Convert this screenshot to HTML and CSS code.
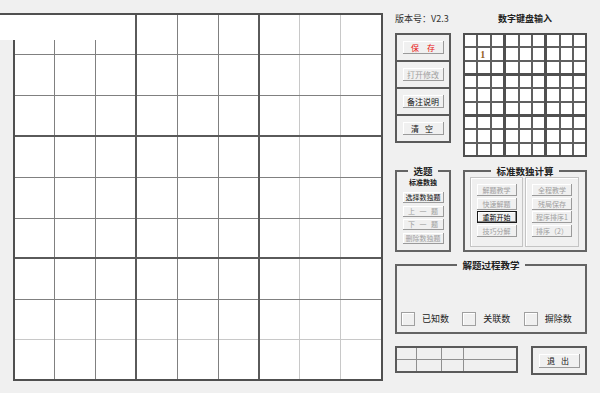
FILE: index.html
```html
<!DOCTYPE html>
<html lang="zh-CN">
  <head>
    <meta charset="UTF-8" />
    <title>数独</title>
    <link rel="stylesheet" href="styles.css">
  </head>
  <body>
    <div class="window">
      <svg class="board" width="370" height="368" viewBox="0 0 370 368">
        <rect width="370" height="368" fill="#fff"/>
        <path stroke="#c8c8c8" stroke-width="1" d="M286.5 0V368M327.5 0V368M0 326.5H370"/>
        <path stroke="#808080" stroke-width="1" d="M41.5 0V368M82.5 0V368M164.5 0V368M205.5 0V368M0 41.5H370M0 82.5H370M0 164.5H370M0 205.5H370M0 286.5H370"/>
        <path stroke="#5a5a5a" stroke-width="2" d="M123 0V368M246 0V368M0 123H370M0 245H370"/>
        <rect x="1" y="1" width="368" height="366" fill="none" stroke="#505050" stroke-width="2"/>
      </svg>
      <div class="board-tag"></div>

      <div class="panel">
        <div class="head">
          <span class="version">版本号：V2.3</span>
          <span class="pad-title">数字键盘输入</span>
        </div>

        <div class="row">
          <div class="tools">
            <div class="slot"><button class="btn save">保　存</button></div>
            <div class="slot"><button class="btn off">打开修改</button></div>
            <div class="slot"><button class="btn">备注说明</button></div>
            <div class="slot"><button class="btn wide">清 空</button></div>
          </div>
          <svg class="pad" width="124" height="124" viewBox="0 0 124 124">
            <rect width="124" height="124" fill="#fff"/>
            <path stroke="#606060" stroke-width="2" fill="none" d="M14 0V124M28 0V124M56 0V124M69 0V124M97 0V124M110 0V124M0 14H124M0 28H124M0 55H124M0 69H124M0 96H124M0 110H124"/>
            <path stroke="#505050" stroke-width="3" d="M41.5 0V124M82.5 0V124M0 41.5H124M0 82.5H124"/>
            <rect x="1" y="1" width="122" height="122" fill="none" stroke="#505050" stroke-width="2"/>
            <text x="19.8" y="25" class="pad-num">1</text>
          </svg>
        </div>

        <div class="row groups">
          <fieldset class="group pick">
            <legend>选题</legend>
            <div class="pick-label">标准数独</div>
            <div class="stack">
              <button class="btn small">选择数独题</button>
              <button class="btn small off spread">上 一 题</button>
              <button class="btn small off spread">下 一 题</button>
              <button class="btn small off">删除数独题</button>
            </div>
          </fieldset>

          <fieldset class="group calc">
            <legend>标准数独计算</legend>
            <div class="calc-cols">
              <div class="col">
                <button class="btn mid off">解题教学</button>
                <button class="btn mid off">快速解题</button>
                <button class="btn mid default">重新开始</button>
                <button class="btn mid off">技巧分解</button>
              </div>
              <div class="col">
                <button class="btn mid off">全程教学</button>
                <button class="btn mid off">残局保存</button>
                <button class="btn mid off">程序排序1</button>
                <button class="btn mid off">排序（2）</button>
              </div>
            </div>
          </fieldset>
        </div>

        <fieldset class="group steps">
          <legend>解题过程教学</legend>
          <div class="checks">
            <label class="check"><span class="box"></span>已知数</label>
            <label class="check"><span class="box"></span>关联数</label>
            <label class="check"><span class="box"></span>摒除数</label>
          </div>
        </fieldset>

        <div class="row bottom">
          <div class="status">
            <span></span><span></span><span></span><span></span>
            <span></span><span></span><span></span><span></span>
          </div>
          <div class="exit-box"><button class="btn exit">退 出</button></div>
        </div>
      </div>
    </div>
  </body>
</html>
```

FILE: styles.css
```css
* {
  box-sizing: border-box;
}

body {
  margin: 0;
  background: #f0f0f0;
  font-family: "Noto Sans CJK SC", "Noto Sans", sans-serif;
  color: #1a1a1a;
}

.window {
  position: relative;
  display: flex;
  align-items: flex-start;
  height: 393px;
  padding: 13px 0 0 13px;
}

.board {
  display: block;
  flex: none;
}

/* white strip that sits over the first row of the board */
.board-tag {
  position: absolute;
  left: 0;
  top: 13px;
  width: 135px;
  height: 27px;
  background: #fff;
  border-top: 2px solid #505050;
}

.panel {
  margin-left: 12px;
  width: 193px;
  display: flex;
  flex-direction: column;
}

.head {
  display: flex;
  height: 20px;
  font-size: 9px;
  line-height: 12px;
  color: #333;
}

.version {
  width: 68px;
}

.pad-title {
  width: 124px;
  text-align: center;
  font-weight: bold;
  color: #222;
}

.row {
  display: flex;
  gap: 12px;
}

/* buttons */
.btn {
  display: block;
  margin: 0;
  padding: 0;
  border: none;
  width: 41px;
  height: 13px;
  background: #f0f0f0;
  font-family: inherit;
  font-size: 8px;
  line-height: 13px;
  color: #111;
  text-align: center;
  white-space: nowrap;
  overflow: hidden;
  box-shadow: inset -1px -1px #9a9a9a, inset 1px 1px #fff;
}

.btn.save {
  color: #e81010;
}

.btn.wide {
  letter-spacing: 2px;
}

.btn.off {
  color: #a0a0a0;
}

.btn.small {
  height: 11px;
  line-height: 11px;
  font-size: 7px;
}

.btn.spread {
  word-spacing: 3px;
}

.btn.mid {
  width: 40px;
  height: 12px;
  line-height: 12px;
  font-size: 7px;
}

.btn.default {
  border: 1px solid #1a1a1a;
  line-height: 10px;
  color: #000;
  box-shadow: inset -1px -1px #8a8a8a, inset 1px 1px #fff;
}

.btn.exit {
  height: 14px;
  line-height: 14px;
  letter-spacing: 2px;
}

/* top-left tool box */
.tools {
  width: 56px;
  height: 110px;
  border: 2px solid #5a5a5a;
  display: flex;
  flex-direction: column;
}

.slot {
  flex: 1;
  display: flex;
  align-items: center;
  justify-content: center;
  border-top: 2px solid #5a5a5a;
}

.slot:first-child {
  border-top: none;
}

.pad {
  display: block;
}

.pad-num {
  font-family: "Liberation Serif", serif;
  font-size: 10px;
  font-weight: bold;
  fill: #94621f;
  text-anchor: middle;
}

/* group boxes */
.group {
  margin: 0;
  padding: 0;
  min-width: 0;
  border: 2px solid #646464;
}

.group legend {
  margin: 0 auto;
  padding: 0 5px;
  font-size: 9.5px;
  line-height: 12px;
  font-weight: bold;
  color: #222;
}

.groups {
  margin-top: 8px;
}

.pick {
  width: 56px;
  height: 87px;
  display: flex;
  flex-direction: column;
  align-items: center;
}

.pick-label {
  height: 10px;
  font-size: 7px;
  line-height: 10px;
  font-weight: bold;
  text-align: center;
}

.stack {
  margin-top: 5px;
  display: flex;
  flex-direction: column;
  gap: 2.5px;
}

.calc {
  width: 124px;
  height: 87px;
}

.calc-cols {
  display: flex;
  gap: 2px;
  padding: 0 5px;
}

.col {
  width: 53px;
  height: 70px;
  padding-top: 6px;
  border: 1px solid #c4c4c4;
  box-shadow: inset 1px 1px #fff;
  display: flex;
  flex-direction: column;
  align-items: center;
  gap: 1.5px;
}

.col + .col {
  width: 54px;
}

.steps {
  margin-top: 7px;
  width: 192px;
  height: 75px;
}

.checks {
  display: flex;
  padding: 41px 0 0 4px;
}

.check {
  width: 62px;
  display: flex;
  align-items: center;
  gap: 7px;
  font-size: 9px;
  line-height: 14px;
  color: #222;
}

.box {
  width: 14px;
  height: 14px;
  flex: none;
  border: 1px solid #a0a0a0;
  box-shadow: inset 1px 1px #fff;
  background: #f0f0f0;
}

.bottom {
  margin-top: 12px;
  gap: 13px;
  align-items: flex-start;
}

.status {
  width: 123px;
  height: 27px;
  border: 2px solid #5a5a5a;
  display: grid;
  grid-template-columns: 20px 25px 22px 1fr;
  grid-template-rows: 1fr 1fr;
}

.status span {
  border-right: 1px solid #909090;
  border-bottom: 1px solid #909090;
}

.status span:nth-child(4n) {
  border-right: none;
}

.status span:nth-child(n+5) {
  border-bottom: none;
}

.exit-box {
  width: 56px;
  height: 29px;
  border: 2px solid #5a5a5a;
  display: flex;
  align-items: center;
  justify-content: center;
}
```
